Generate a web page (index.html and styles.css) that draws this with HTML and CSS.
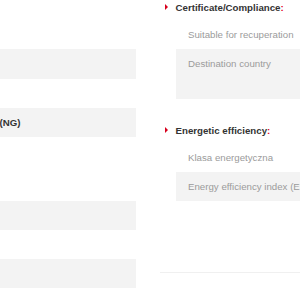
FILE: index.html
```html
<!DOCTYPE html>
<html lang="en">
<head>
    <meta charset="UTF-8">
    <meta name="viewport" content="width=device-width, initial-scale=1.0">
    <title>Product parameters</title>
    <link rel="stylesheet" href="styles.css">
</head>
<body>
    <div class="page">
        <div class="column left">
            <div class="section">
                <div class="row"></div>
                <div class="row shaded first"></div>
                <div class="row"></div>
                <div class="row shaded strong">Natural gas (NG)</div>
            </div>
            <div class="section lower">
                <div class="row shaded"></div>
                <div class="row"></div>
                <div class="row shaded"></div>
            </div>
        </div>

        <div class="column right">
            <div class="section">
                <h2 class="heading">Certificate/Compliance<span class="colon">:</span></h2>
                <div class="row">Suitable for recuperation</div>
                <div class="row shaded tall">Destination country</div>
            </div>
            <div class="section">
                <h2 class="heading">Energetic efficiency<span class="colon">:</span></h2>
                <div class="row">Klasa energetyczna</div>
                <div class="row shaded">Energy efficiency index (EEI)</div>
            </div>
            <div class="divider"></div>
        </div>
    </div>
</body>
</html>
```

FILE: styles.css
```css
body {
    font-family: "Liberation Sans", Arial, sans-serif;
    font-size: 9.7px;
    margin: 0;
    padding: 0;
    background-color: #ffffff;
    overflow: hidden;
}
.page {
    display: flex;
    gap: 24px;
    width: 500px;
}
.column.left {
    width: 204px;
    margin-left: -68px;
    padding-top: 20px;
    flex-shrink: 0;
}
.column.right {
    width: 220px;
    flex-shrink: 0;
}
.section + .section {
    margin-top: 24px;
}
.section.lower {
    margin-top: 64px;
}
.heading {
    display: flex;
    align-items: center;
    margin: 0 0 5px 0;
    padding-left: 5px;
    height: 15px;
    font-size: 9.7px;
    font-weight: bold;
    color: #333;
}
.heading::before {
    content: "";
    width: 0;
    height: 0;
    border-top: 3.5px solid transparent;
    border-bottom: 3.5px solid transparent;
    border-left: 3.5px solid #d7001d;
    margin-right: 7.5px;
    margin-top: -2px;
}
.colon {
    color: #e3001b;
}
.row {
    height: 29px;
    line-height: 29px;
    padding-left: 12px;
    color: #9b9b9b;
    white-space: nowrap;
}
.right .row {
    margin-left: 16px;
}
.row.shaded {
    background-color: #f3f3f3;
}
.row.first {
    height: 30px;
}
.row.tall {
    height: 50px;
}
.row.strong {
    font-weight: bold;
    color: #333;
}
.divider {
    margin-top: 71px;
    border-top: 1px solid #f0f0f0;
}
```
